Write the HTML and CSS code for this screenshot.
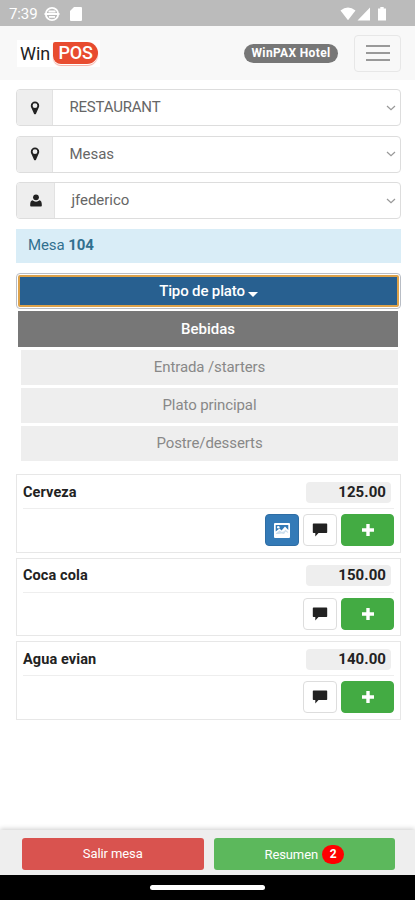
FILE: index.html
```html
<!DOCTYPE html>
<html lang="es">
<head>
<meta charset="utf-8">
<meta name="viewport" content="width=device-width, initial-scale=1">
<title>WinPOS</title>
<link rel="stylesheet" href="styles.css">
</head>
<body>
<svg width="0" height="0" class="defs">
  <symbol id="pin" viewBox="0 0 10 14"><path fill-rule="evenodd" d="M5 .5a4.2 4.2 0 0 1 4.2 4.2c0 1.2-.4 1.8-.9 2.8L6 12.700c-.4.8-1.600.8-2 0L1.700 7.500C1.200 6.500.8 5.900.8 4.700A4.200 4.200 0 0 1 5 .5zM5 2.300a2.400 2.400 0 1 0 0 4.800 2.400 2.400 0 0 0 0-4.800z"/></symbol>
  <symbol id="user" viewBox="0 0 12 13"><circle cx="6" cy="3.300" r="2.900"/><path d="M2.500 6.200C1 6.600.2 8 .2 10.500v1.300q0 .8.8.8h10q.8 0 .8-.8v-1.300C11.800 8 11 6.600 9.500 6.200A5 5 0 0 1 2.500 6.200z"/></symbol>
  <symbol id="chevron" viewBox="0 0 10 6"><path d="M1 1l4 3.700L9 1" fill="none" stroke="#999" stroke-width="1.200"/></symbol>
  <symbol id="comment" viewBox="0 0 16 14"><path d="M1.500.5h13q.7 0 .7.700v8q0 .7-.7.700H6.500L3.300 13.500V9.900H1.500q-.7 0-.7-.7v-8q0-.7.7-.7z"/></symbol>
  <symbol id="plus" viewBox="0 0 12 12"><path d="M4.300 0h3.400v4.300H12v3.400H7.700V12H4.300V7.700H0V4.300h4.300z"/></symbol>
  <symbol id="image" viewBox="0 0 16 15"><path fill-rule="evenodd" d="M1 0h14q1 0 1 1v13q0 1-1 1H1q-1 0-1-1V1Q0 0 1 0zM1.700 2v6.500L5.500 5.500l2 2L11 3.500l3.300 3.500V2z"/><path fill="#337ab7" d="M1.900 10.300l3.600-2.700 2.300 1.500 2.500-.8 1-1.800 2.800 2.500v1l-2.500-1.500-1.500 2.500-3-.5-2 .5H1.900z" opacity=".25"/><circle cx="4.300" cy="4.200" r="1.300"/></symbol>
</svg>
<div class="screen">
  <div class="status">
    <span class="clock">7:39</span>
    <svg class="face" viewBox="0 0 16 16"><circle cx="8" cy="8" r="6.200"/><path d="M.5 8h15M4.500 5.500h7M5 10.800h6"/></svg>
    <svg class="sd" viewBox="0 0 12 14"><path d="M4 0h7q1 0 1 1v12q0 1-1 1H1q-1 0-1-1V4z"/></svg>
    <svg class="signals" viewBox="0 0 48 14"><path d="M.5 3.500Q8 -2.500 15.500 3.500L8 13.200zM30 .5V13.500H17.500zM40.300 0h3.400v1.400H46V13.600H38V1.400h2.300z"/></svg>
  </div>
  <header class="navbar">
    <div class="logo"><span class="win">Win</span><span class="pos">POS</span></div>
    <span class="hotel">WinPAX Hotel</span>
    <div class="toggle"><i></i><i></i><i></i></div>
  </header>
  <main>
    <div class="field"><span class="addon"><svg class="pin"><use href="#pin"/></svg></span><span class="value restaurant">RESTAURANT</span><svg class="chevron"><use href="#chevron"/></svg></div>
    <div class="field"><span class="addon"><svg class="pin"><use href="#pin"/></svg></span><span class="value">Mesas</span><svg class="chevron"><use href="#chevron"/></svg></div>
    <div class="field"><span class="addon wide"><svg class="user"><use href="#user"/></svg></span><span class="value">jfederico</span><svg class="chevron"><use href="#chevron"/></svg></div>
    <div class="info">Mesa <b>104</b></div>
    <div class="focus"><div class="type">Tipo de plato<i class="caret"></i></div></div>
    <div class="option active">Bebidas</div>
    <div class="option">Entrada /starters</div>
    <div class="option">Plato principal</div>
    <div class="option">Postre/desserts</div>
    <section class="cards">
      <article class="card">
        <div class="head"><span>Cerveza</span><span class="price">125.00</span></div>
        <div class="actions"><span class="btn blue"><svg class="image"><use href="#image"/></svg></span><span class="btn"><svg class="comment"><use href="#comment"/></svg></span><span class="btn add"><svg class="plus"><use href="#plus"/></svg></span></div>
      </article>
      <article class="card">
        <div class="head"><span>Coca cola</span><span class="price">150.00</span></div>
        <div class="actions"><span class="btn"><svg class="comment"><use href="#comment"/></svg></span><span class="btn add"><svg class="plus"><use href="#plus"/></svg></span></div>
      </article>
      <article class="card">
        <div class="head"><span>Agua evian</span><span class="price">140.00</span></div>
        <div class="actions"><span class="btn"><svg class="comment"><use href="#comment"/></svg></span><span class="btn add"><svg class="plus"><use href="#plus"/></svg></span></div>
      </article>
    </section>
  </main>
  <footer><div class="leave">Salir mesa</div><div class="summary">Resumen<span class="count">2</span></div></footer>
  <div class="home"><i></i></div>
</div>
</body>
</html>
```
FILE: styles.css
```css
* { box-sizing: border-box; }
body { margin: 0; background: #fff; font-family: Roboto, "Liberation Sans", sans-serif; }
svg { display: block; flex: none; }
.defs { position: absolute; }
.screen { width: 415px; height: 900px; display: flex; flex-direction: column; overflow: hidden; }
.status { height: 26px; background: #bbb; color: #fff; fill: #fff; display: flex; align-items: center; padding: 1px 27px 0 9px; flex: none; }
.clock { font-size: 15px; width: 35px; line-height: 24px; letter-spacing: -.1px; }
.face { width: 16px; height: 16px; fill: none; stroke: #fff; stroke-width: 1.8; }
.sd { width: 12px; height: 14px; margin-left: 10px; }
.signals { width: 48px; height: 14px; margin-left: auto; }
.navbar { height: 54px; background: #f8f8f8; display: flex; align-items: center; padding: 0 14px 0 17px; flex: none; }
.logo { width: 83px; height: 27px; background: #fff; display: flex; align-items: center; padding-left: 3px; font-size: 18px; color: #222; }
.win { width: 33px; line-height: 24px; padding-top: 1px; }
.pos { width: 45px; height: 22px; line-height: 22px; color: #fff; background: #e84c30; border-radius: 2px 11px 11px 8px; font-weight: 500; text-align: center; box-shadow: 0 1px 0 #fff, 0 2px 1px #f5aca0; letter-spacing: -.2px; }
.hotel { margin-left: auto; width: 94px; height: 19px; border-radius: 10px; background: #777; color: #fff; font-size: 12px; font-weight: 700; line-height: 18px; text-align: center; letter-spacing: .35px; }
.toggle { margin-left: 16px; width: 47px; height: 37px; border: 1px solid #e7e7e7; border-radius: 4px; display: flex; flex-direction: column; align-items: center; justify-content: center; gap: 5px; }
.toggle i { width: 24px; height: 2px; background: #999; }
main { flex: 1; padding: 9px 14px 0 16px; }
.field { height: 37px; border: 1px solid #ddd; border-radius: 4px; display: flex; align-items: center; margin-bottom: 9.500px; color: #666; font-size: 15px; overflow: hidden; padding-right: 4px; }
.addon { width: 36px; height: 100%; background: #eee; border-right: 1px solid #e2e2e2; display: flex; align-items: center; justify-content: center; fill: #222; }
.wide { width: 38px; }
.pin { width: 10px; height: 14px; }
.user { width: 12px; height: 13px; }
.chevron { width: 10px; height: 6px; }
.value { flex: 1; padding-left: 16.500px; letter-spacing: -.05px; line-height: 22px; padding-bottom: 1px; }
.restaurant { letter-spacing: -.2px; }
.info { margin-top: 10px; height: 34px; line-height: 33px; padding-left: 12px; background: #d9edf7; color: #31708f; font-size: 15px; letter-spacing: -.1px; }
.focus { margin-top: 10px; height: 36px; border: 1px solid #b8bdc5; border-radius: 4px; padding: 1px; }
.type { height: 32px; border: 2px solid #dda24a; border-radius: 2px; background: #286090; color: #fff; font-size: 15px; font-weight: 500; line-height: 29px; text-align: center; letter-spacing: -.15px; }
.caret { display: inline-block; border: 5px solid transparent; border-top-color: #fff; border-bottom: 0; margin-left: 3px; vertical-align: -1px; }
.option { height: 35px; margin: 3px 3px 0 5px; background: #eee; color: #888; font-size: 15px; line-height: 35px; text-align: center; letter-spacing: -.1px; }
.active { margin: 2px 3px 0 2px; height: 36px; line-height: 36px; background: #777; color: #fff; font-weight: 500; letter-spacing: 0; }
.cards { margin-top: 13px; display: grid; gap: 5px; }
.card { height: 78.500px; border: 1px solid #e7e7e7; padding: 0 6px; }
.head { height: 34px; border-bottom: 1px solid #eee; display: flex; align-items: center; justify-content: space-between; color: #222; font-size: 14.500px; font-weight: 700; letter-spacing: .1px; padding-top: 1px; }
.price { width: 85px; height: 21px; margin-right: 3px; border-radius: 4px; background: #eee; padding-right: 5px; text-align: right; line-height: 21px; font-size: 15px; letter-spacing: .05px; }
.actions { display: flex; justify-content: flex-end; gap: 4px; padding-top: 5px; }
.btn { width: 34px; height: 32px; border: 1px solid #ddd; border-radius: 4px; display: flex; align-items: center; justify-content: center; fill: #222; }
.blue { background: #337ab7; border-color: #2e6da4; fill: #fff; }
.add { width: 53px; background: #43ab43; border-color: #43ab43; fill: #fff; }
.image { width: 16px; height: 15px; }
.comment { width: 16px; height: 14px; }
.plus { width: 12px; height: 12px; }
footer { height: 45px; flex: none; background: #eee; display: flex; gap: 10px; padding: 8px 20px 0 22px; box-shadow: 0 -1px 5px rgba(0,0,0,.2); color: #fff; font-size: 13px; line-height: 31px; text-align: center; letter-spacing: -.1px; }
.leave, .summary { flex: 1; height: 32px; border-radius: 3px; }
.leave { background: #d9534f; }
.summary { background: #5cb85c; display: flex; align-items: center; justify-content: center; gap: 4px; }
.count { width: 22px; height: 19px; border-radius: 10px; background: red; line-height: 19px; font-size: 12px; font-weight: 700; }
.home { height: 25px; flex: none; background: #000; display: flex; justify-content: center; align-items: center; }
.home i { width: 115px; height: 5px; border-radius: 3px; background: #fff; }
```
